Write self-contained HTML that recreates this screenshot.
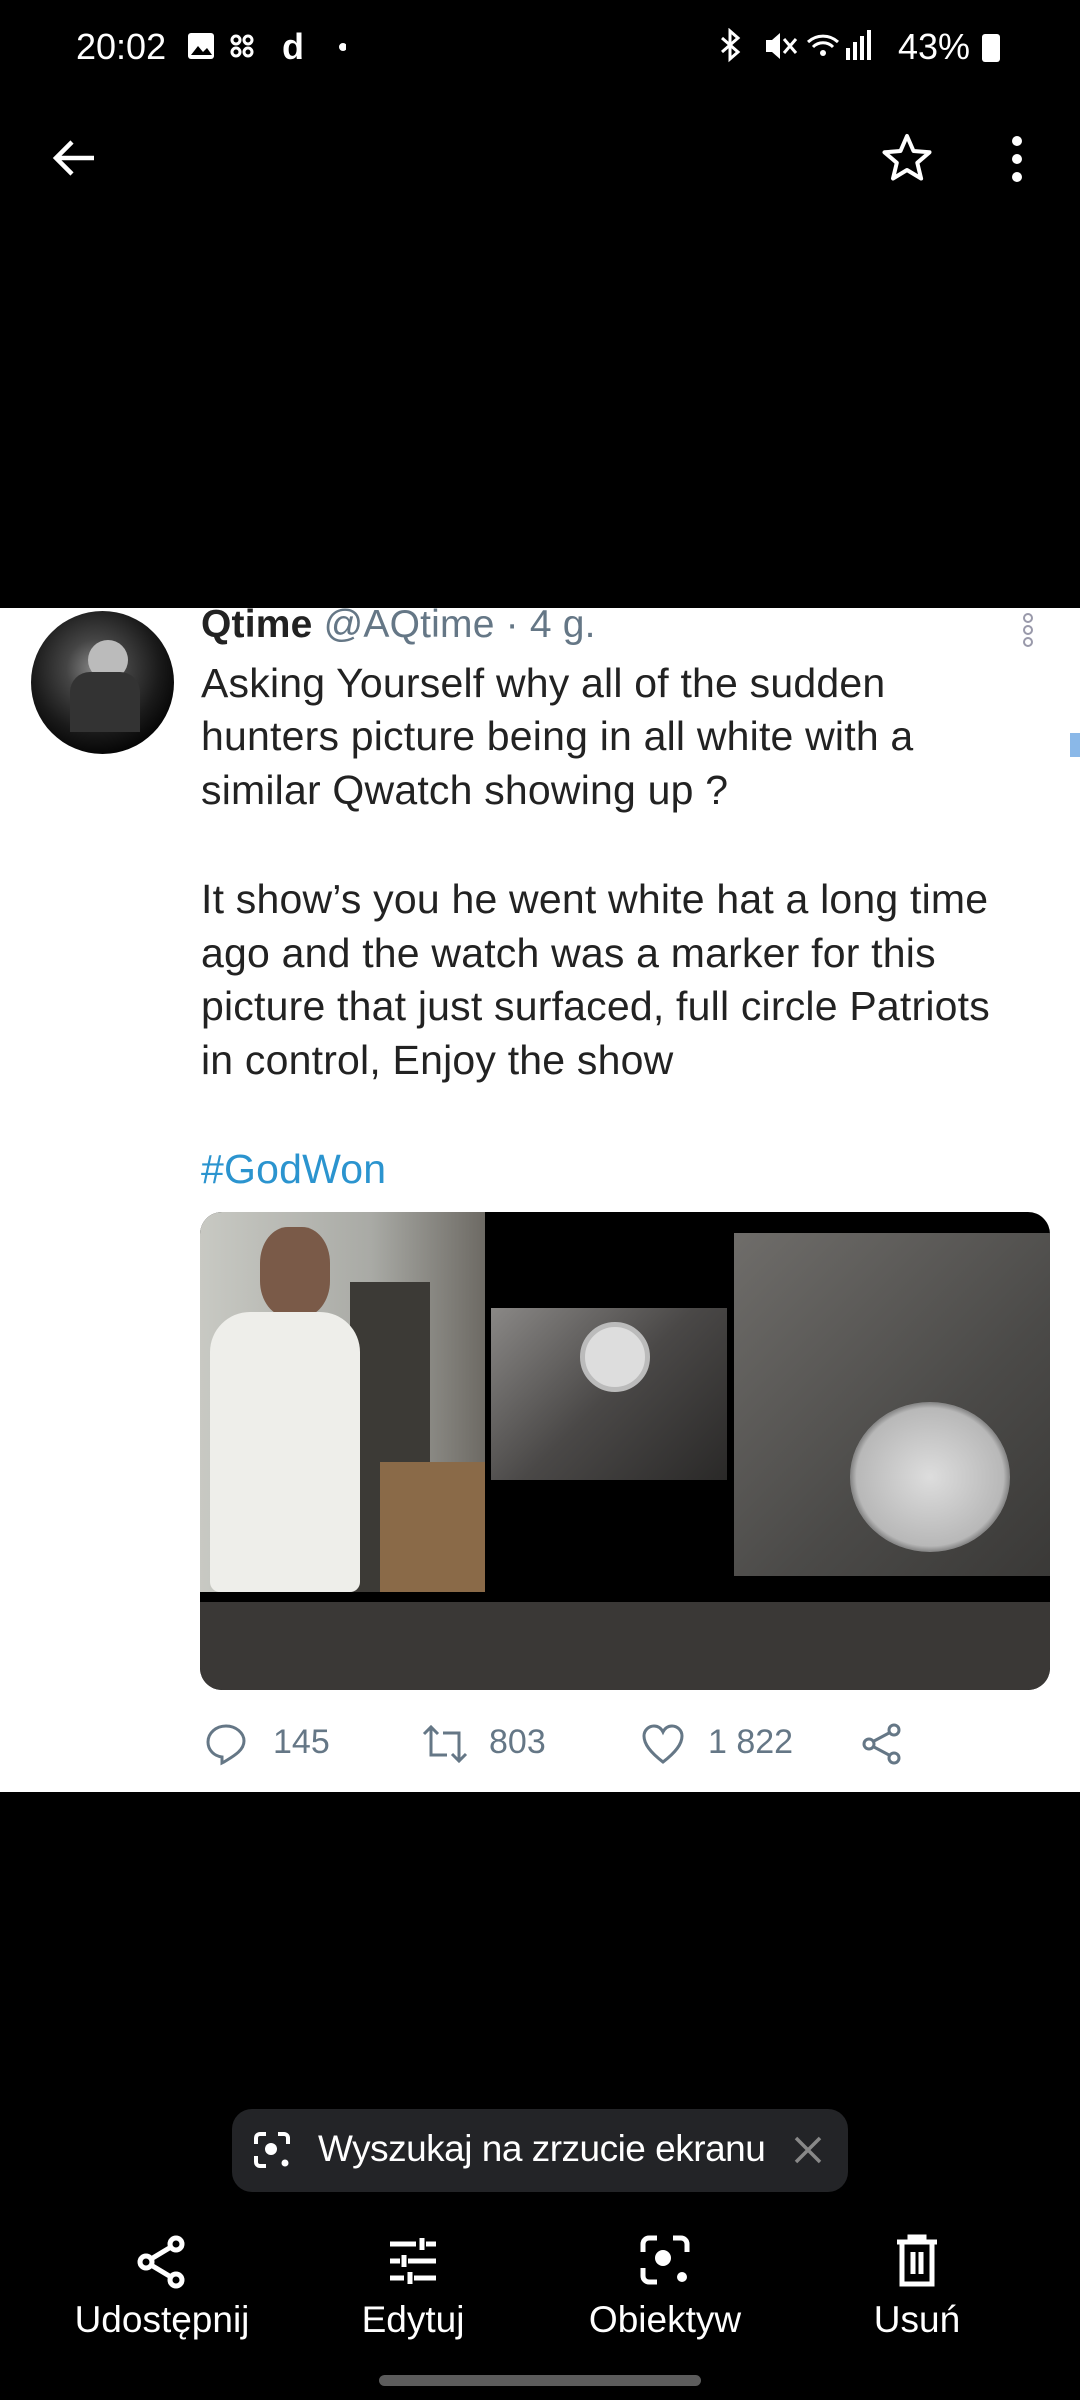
<!DOCTYPE html>
<html><head><meta charset="utf-8"><style>
*{margin:0;padding:0;box-sizing:border-box}
body{width:1080px;height:2400px;background:#000;position:relative;overflow:hidden;font-family:"Liberation Sans",sans-serif}
.abs{position:absolute}
.sb{color:#fff;font-size:36px;top:26px}
.card{left:0;top:608px;width:1080px;height:1184px;background:#fff}
.t{position:absolute;left:201px;font-size:41px;color:#222;white-space:nowrap;letter-spacing:0.2px}
.cnt{position:absolute;font-size:34px;color:#657786;top:1723px}
.lbl{position:absolute;color:#fff;font-size:37px;top:2299px;width:240px;text-align:center}
</style></head><body>
<!-- status bar -->
<div class="abs sb" style="left:76px">20:02</div>
<svg class="abs" style="left:186px;top:30px" width="160" height="34" viewBox="0 0 160 34">
<rect x="2" y="3" width="26" height="26" rx="3" fill="#fff"/><path d="M5 25l7-9 5 6 4-4 5 7z" fill="#000"/>
<g fill="none" stroke="#fff" stroke-width="3"><circle cx="50" cy="10" r="4"/><circle cx="62" cy="10" r="4"/><circle cx="50" cy="22" r="4"/><circle cx="62" cy="22" r="4"/></g>
<text x="96" y="29" fill="#fff" font-size="36" font-weight="bold" font-family="Liberation Sans">d</text>
<circle cx="157" cy="17" r="4" fill="#fff"/></svg>
<div class="abs sb" style="left:898px">43%</div>
<svg class="abs" style="left:716px;top:28px" width="290" height="36" viewBox="0 0 290 36">
<path d="M6 10l16 14-8 7V3l8 7-16 14" fill="none" stroke="#fff" stroke-width="3"/>
<path d="M50 12h6l8-7v26l-8-7h-6z" fill="#fff"/><path d="M68 11l12 14M80 11l-12 14" stroke="#fff" stroke-width="3"/>
<path d="M92 14a22 22 0 0 1 30 0M97 19a14 14 0 0 1 20 0" fill="none" stroke="#fff" stroke-width="3"/><circle cx="107" cy="25" r="3" fill="#fff"/>
<rect x="130" y="20" width="4" height="12" fill="#fff"/><rect x="137" y="14" width="4" height="18" fill="#fff"/><rect x="144" y="8" width="4" height="24" fill="#fff"/><rect x="151" y="2" width="4" height="30" fill="#fff"/>
<rect x="266" y="6" width="18" height="28" rx="3" fill="#fff"/></svg>
<!-- top bar -->
<svg class="abs" style="left:50px;top:134px" width="48" height="48" viewBox="0 0 48 48"><path d="M44 24H6M22 8L6 24l16 16" fill="none" stroke="#fff" stroke-width="4.5"/></svg>
<svg class="abs" style="left:880px;top:132px" width="54" height="52" viewBox="0 0 54 52"><path d="M27 4l6.5 15 16 1.3-12.2 10.5 3.8 15.7L27 38l-14 8.5 3.8-15.7L4.5 20.3l16-1.3z" fill="none" stroke="#fff" stroke-width="4" stroke-linejoin="round"/></svg>
<svg class="abs" style="left:1006px;top:134px" width="22" height="50"><circle cx="11" cy="7" r="5" fill="#fff"/><circle cx="11" cy="25" r="5" fill="#fff"/><circle cx="11" cy="43" r="5" fill="#fff"/></svg>

<!-- card -->
<div class="abs card"></div>
<div class="abs" style="left:31px;top:611px;width:143px;height:143px;border-radius:50%;background:radial-gradient(circle at 45% 40%,#888 0,#444 25%,#1a1a1a 55%,#000 80%)"></div>
<div class="abs" style="left:88px;top:640px;width:40px;height:40px;border-radius:50%;background:#bbb"></div>
<div class="abs" style="left:70px;top:672px;width:70px;height:60px;border-radius:20px 20px 0 0;background:#333"></div>
<svg class="abs" style="left:1020px;top:612px" width="16" height="36"><g fill="none" stroke="#99a" stroke-width="2"><circle cx="8" cy="6" r="4"/><circle cx="8" cy="18" r="4"/><circle cx="8" cy="30" r="4"/></g></svg>
<div class="abs" style="left:1070px;top:733px;width:10px;height:24px;background:#8ab8e8"></div>
<div class="t" style="top:603px;font-size:39px"><b>Qtime</b> <span style="color:#657786">@AQtime · 4 g.</span></div>
<div class="t" style="top:660px">Asking Yourself why all of the sudden</div>
<div class="t" style="top:713px">hunters picture being in all white with a</div>
<div class="t" style="top:767px">similar Qwatch showing up ?</div>
<div class="t" style="top:876px">It show’s you he went white hat a long time</div>
<div class="t" style="top:930px">ago and the watch was a marker for this</div>
<div class="t" style="top:983px">picture that just surfaced, full circle Patriots</div>
<div class="t" style="top:1037px">in control, Enjoy the show</div>
<div class="t" style="top:1146px;color:#2b94cf">#GodWon</div>

<!-- image -->
<div class="abs" style="left:200px;top:1212px;width:850px;height:478px;border-radius:22px;overflow:hidden;background:#000">
  <div class="abs" style="left:0;top:390px;width:850px;height:88px;background:#3a3836"></div>
  <div class="abs" style="left:0;top:0;width:285px;height:380px;background:linear-gradient(90deg,#c8c9c3,#a9aaa5 60%,#6d6a64)"></div>
  <div class="abs" style="left:150px;top:70px;width:80px;height:310px;background:#3c3a36"></div>
  <div class="abs" style="left:180px;top:250px;width:105px;height:130px;background:#8a6a48"></div>
  <div class="abs" style="left:60px;top:15px;width:70px;height:90px;border-radius:40%;background:#7a5a48"></div>
  <div class="abs" style="left:10px;top:100px;width:150px;height:280px;border-radius:40px 40px 10px 10px;background:#eeeeea"></div>
  <div class="abs" style="left:291px;top:96px;width:236px;height:172px;background:linear-gradient(135deg,#8a8886,#4a4847 50%,#2a2928)"></div>
  <div class="abs" style="left:380px;top:110px;width:70px;height:70px;border-radius:50%;background:#ddd;border:5px solid #bbb"></div>
  <div class="abs" style="left:534px;top:21px;width:316px;height:343px;background:linear-gradient(135deg,#6f6d6a,#4b4a48 60%,#3a3937)"></div>
  <div class="abs" style="left:650px;top:190px;width:160px;height:150px;border-radius:50%;background:radial-gradient(#ddd,#b8b8b8 65%,#888 70%,#ccc 80%)"></div>
</div>

<!-- actions -->
<svg class="abs" style="left:204px;top:1722px" width="44" height="44" viewBox="0 0 44 44"><path d="M22 4C12 4 4 11 4 20c0 8 6 14 14 15v6l2-1c8-5 20-11 20-21C40 11 32 4 22 4z" fill="none" stroke="#657786" stroke-width="3"/></svg>
<div class="cnt" style="left:273px">145</div>
<svg class="abs" style="left:420px;top:1722px" width="50" height="44" viewBox="0 0 50 44"><path d="M4 12l7-7 7 7M11 5v28h16M46 32l-7 7-7-7M39 39V11H23" fill="none" stroke="#657786" stroke-width="3"/></svg>
<div class="cnt" style="left:489px">803</div>
<svg class="abs" style="left:640px;top:1722px" width="46" height="44" viewBox="0 0 46 44"><path d="M23 40C10 30 4 22 4 14 4 8 9 4 14 4c4 0 7 2 9 6 2-4 5-6 9-6 5 0 10 4 10 10 0 8-6 16-19 26z" fill="none" stroke="#657786" stroke-width="3"/></svg>
<div class="cnt" style="left:708px">1 822</div>
<svg class="abs" style="left:860px;top:1722px" width="44" height="44" viewBox="0 0 44 44"><g fill="none" stroke="#657786" stroke-width="3"><circle cx="34" cy="8" r="5"/><circle cx="9" cy="22" r="5"/><circle cx="34" cy="36" r="5"/><path d="M14 19l15-8M14 25l15 8"/></g></svg>

<!-- pill -->
<div class="abs" style="left:232px;top:2109px;width:616px;height:83px;border-radius:20px;background:#232427"></div>
<svg class="abs" style="left:252px;top:2130px" width="40" height="40" viewBox="0 0 40 40"><g fill="none" stroke="#fff" stroke-width="4"><path d="M4 14V8a4 4 0 0 1 4-4h6M26 4h6a4 4 0 0 1 4 4v6M4 26v6a4 4 0 0 0 4 4h6"/></g><circle cx="19" cy="19" r="6" fill="#fff"/><circle cx="33" cy="33" r="3.5" fill="#fff"/></svg>
<div class="abs" style="left:318px;top:2128px;color:#fff;font-size:37px;letter-spacing:-0.5px">Wyszukaj na zrzucie ekranu</div>
<svg class="abs" style="left:792px;top:2134px" width="32" height="32"><path d="M4 4l24 24M28 4L4 28" stroke="#888" stroke-width="3.5"/></svg>

<!-- bottom bar -->
<svg class="abs" style="left:136px;top:2234px" width="52" height="56" viewBox="0 0 52 56"><g fill="none" stroke="#fff" stroke-width="5"><circle cx="40" cy="10" r="6"/><circle cx="10" cy="28" r="6"/><circle cx="40" cy="46" r="6"/><path d="M15 25l20-12M15 31l20 12"/></g></svg>
<svg class="abs" style="left:388px;top:2236px" width="50" height="50" viewBox="0 0 50 50"><g stroke="#fff" stroke-width="5"><path d="M2 8h26M34 2v12M38 8h10M2 25h10M16 19v12M20 25h28M2 42h14M22 36v12M26 42h22"/></g></svg>
<svg class="abs" style="left:639px;top:2234px" width="52" height="52" viewBox="0 0 52 52"><g fill="none" stroke="#fff" stroke-width="5"><path d="M4 18V10a6 6 0 0 1 6-6h8M34 4h8a6 6 0 0 1 6 6v8M4 34v8a6 6 0 0 0 6 6h8"/></g><circle cx="24" cy="24" r="8" fill="#fff"/><circle cx="43" cy="43" r="5" fill="#fff"/></svg>
<svg class="abs" style="left:895px;top:2234px" width="44" height="54" viewBox="0 0 44 54"><g fill="none" stroke="#fff" stroke-width="5"><path d="M2 8h40M15 8V3h14v5M7 8v42h30V8M18 18v22M26 18v22"/></g></svg>
<div class="lbl" style="left:42px">Udostępnij</div>
<div class="lbl" style="left:293px">Edytuj</div>
<div class="lbl" style="left:545px">Obiektyw</div>
<div class="lbl" style="left:797px">Usuń</div>
<div class="abs" style="left:379px;top:2375px;width:322px;height:11px;border-radius:6px;background:#5c5c5c"></div>
</body></html>
